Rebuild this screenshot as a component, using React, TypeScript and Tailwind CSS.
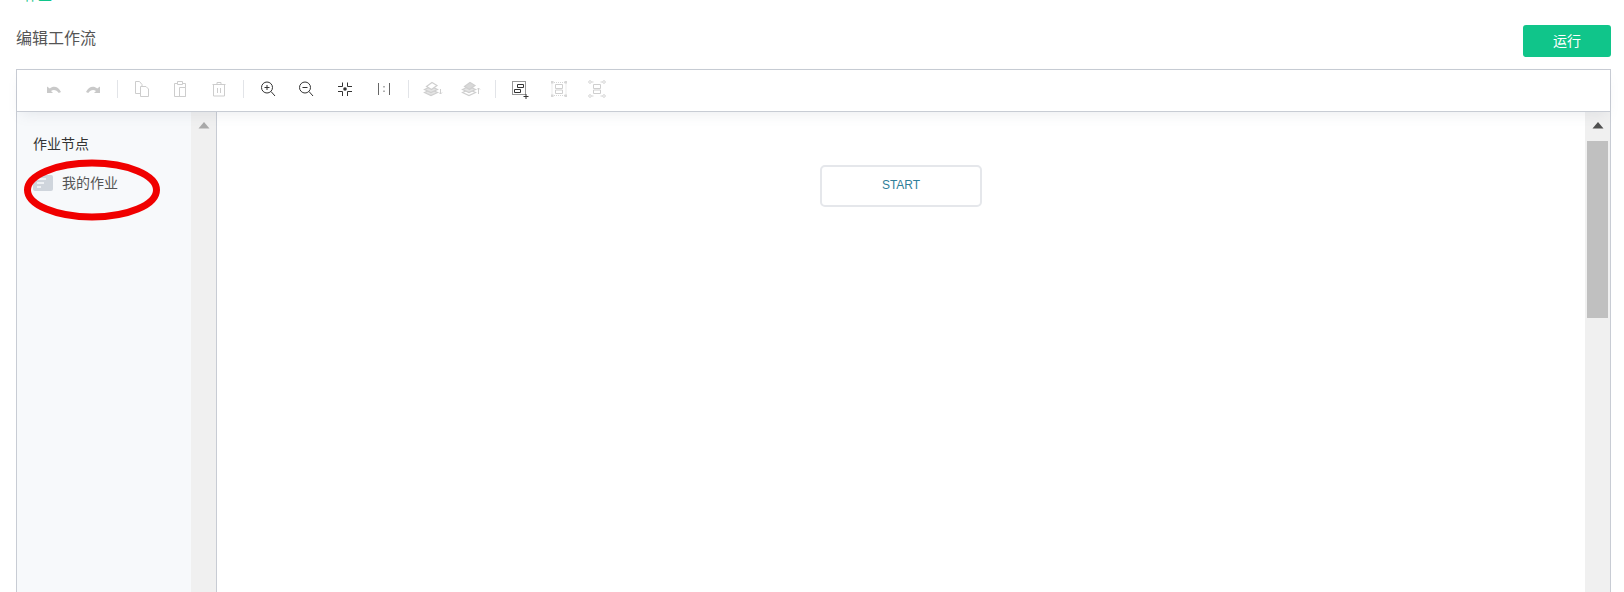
import React from 'react';

const font = { fontFamily: '"Liberation Sans", "Noto Sans CJK SC", sans-serif' };

const Separator = () => <div className="w-px h-[18px] bg-[#e2e4e8] mx-[4.5px]" />;

const ToolButton = ({ children }: { children: React.ReactNode }) => (
  <div className="w-[38.7px] h-[20px] flex items-center justify-center">
    <svg width="20" height="20" viewBox="0 0 20 20" fill="none">
      {children}
    </svg>
  </div>
);

const Toolbar = () => (
  <div className="relative z-10 h-[42px] shrink-0 flex items-center pl-[18px] pb-[3px] bg-white border-b border-[#c8ccd4] shadow-[0_6px_14px_-4px_rgba(120,130,150,0.14)]">
    {/* undo */}
    <ToolButton>
      <path d="M3 7.500V14h6L7 12c2.400-1.800 5.600-1.200 7.800 2l2.200-1C14.400 7.600 9.600 6.400 5.800 9.400L3 7.500z" fill="#c9c9c9" />
    </ToolButton>
    {/* redo */}
    <ToolButton>
      <path d="M17 7.500V14h-6l2-2c-2.400-1.800-5.600-1.200-7.800 2L3 13c2.600-5.400 7.400-6.600 11.200-3.600L17 7.500z" fill="#c9c9c9" />
    </ToolButton>
    <Separator />
    {/* copy */}
    <ToolButton>
      <g stroke="#cdcdcd" strokeWidth="1">
        <path d="M9.500 14.500h-6v-12h4l2.500 3v1.500" />
        <path d="M8.500 7.500h5.500l2.500 2.500v7.500h-8z" fill="#fff" />
      </g>
    </ToolButton>
    {/* paste */}
    <ToolButton>
      <g stroke="#cdcdcd" strokeWidth="1">
        <path d="M4.500 4.500h11v13h-11z" />
        <path d="M7.500 2.500h5v3h-5z" fill="#fff" />
        <path d="M9.500 8.500h6v9h-6z" fill="#fff" />
      </g>
    </ToolButton>
    {/* trash */}
    <ToolButton>
      <g stroke="#cdcdcd" strokeWidth="1">
        <path d="M3.500 5.500h13M4.500 5.500h11v11.500h-11zM8 5.500V3.500h4v2M8.500 9v5M11.500 9v5" />
      </g>
    </ToolButton>
    <Separator />
    {/* zoom in */}
    <ToolButton>
      <g stroke="#333" strokeWidth="1">
        <circle cx="9" cy="8.500" r="5.500" />
        <path d="M13 12.500l4 4.500M9 6v5M6.500 8.500h5" />
      </g>
    </ToolButton>
    {/* zoom out */}
    <ToolButton>
      <g stroke="#333" strokeWidth="1">
        <circle cx="9" cy="8.500" r="5.500" />
        <path d="M13 12.500l4 4.500M6.500 8.500h5" />
      </g>
    </ToolButton>
    {/* fit */}
    <ToolButton>
      <g stroke="#333" strokeWidth="1">
        <path d="M3 7.500h4.500V3.500M12.500 3.500v4H17M3 12.500h4.500V17M12.500 17v-4.500H17" />
      </g>
      <circle cx="10" cy="10" r="1.800" fill="#333" />
    </ToolButton>
    {/* actual size */}
    <ToolButton>
      <g stroke="#666" strokeWidth="1">
        <path d="M4.500 4v12M15.500 4v12" />
        <path d="M10 7v1.500M10 11.500V13" />
      </g>
    </ToolButton>
    <Separator />
    {/* send to back */}
    <ToolButton>
      <g stroke="#cfcfcf" strokeWidth="1.200" fill="#e4e4e4">
        <path d="M1.500 13.500l6.500-3 6.500 3-6.500 3z" />
        <path d="M1.500 10.500l6.500-3 6.500 3-6.500 3z" />
        <path d="M3.500 7.500l5.500-4 5 3-5.500 4z" fill="#fff" />
      </g>
      <path d="M17.500 10v5M16 13.500l1.500 1.500 1.500-1.500" stroke="#cfcfcf" />
    </ToolButton>
    {/* bring to front */}
    <ToolButton>
      <g stroke="#cfcfcf" strokeWidth="1.200">
        <path d="M1.500 13.500l6.500-3 6.500 3-6.500 3z" fill="#fff" />
        <path d="M1.500 10.500l6.500-3 6.500 3-6.500 3z" fill="#e4e4e4" />
        <path d="M3.500 7.500l5.500-4 5 3-5.500 4z" fill="#d8d8d8" />
      </g>
      <path d="M17.500 15v-6M16 10.500L17.500 9l1.500 1.500" stroke="#cfcfcf" />
    </ToolButton>
    <Separator />
    {/* group add */}
    <ToolButton>
      <path d="M2.500 2.500h13v13h-13z" stroke="#333" strokeDasharray="1 1" />
      <path d="M7.500 5.500h6v3h-6zM4.500 10.500h6v3h-6z" stroke="#333" />
      <path d="M13.500 17.500h5M16 15v5" stroke="#333" />
    </ToolButton>
    {/* group */}
    <ToolButton>
      <path d="M3 3.500h14v13H3z" stroke="#d6d6d6" strokeDasharray="1 1" />
      <path d="M2 2h2.500v2.500H2zM15.500 2H18v2.500h-2.500zM2 15.500h2.500V18H2zM15.500 15.500H18V18h-2.500z" fill="#d6d6d6" />
      <path d="M6.500 5.500h7v4h-7zM6.500 11h7v3.500h-7z" stroke="#cfcfcf" />
    </ToolButton>
    {/* ungroup */}
    <ToolButton>
      <path d="M4.500 3h2M13.500 3h2M4.500 17h2M13.500 17h2" stroke="#d6d6d6" />
      <circle cx="3" cy="3" r="1.300" stroke="#d6d6d6" />
      <circle cx="17" cy="3" r="1.300" stroke="#d6d6d6" />
      <circle cx="3" cy="17" r="1.300" stroke="#d6d6d6" />
      <circle cx="17" cy="17" r="1.300" stroke="#d6d6d6" />
      <path d="M6.500 5.500h7v4h-7zM6.500 11h7v3.500h-7z" stroke="#cfcfcf" />
    </ToolButton>
  </div>
);

const UpArrow = ({ color }: { color: string }) => (
  <div className="h-[27px] flex items-center justify-center shrink-0">
    <svg width="12" height="7" viewBox="0 0 12 7">
      <path d="M6 0l5.500 6.500H.5z" fill={color} />
    </svg>
  </div>
);

const Sidebar = () => (
  <div className="relative w-[200px] shrink-0 flex border-r border-[#c8ccd4]">
    <div className="w-[174px] bg-[#f7f9fb] pl-[16px] pt-[22px]">
      <div className="text-[14px] leading-[20px] text-[#333]">作业节点</div>
      <div className="flex items-center gap-[9px] mt-[19px] h-[20px]">
        <div className="w-[20px] h-[16px] rounded-[2px] bg-[#cfd5dc] flex flex-col justify-center gap-[2px] pl-[4px]">
          <div className="w-[9px] h-[2px] bg-[#eef1f4]" />
          <div className="w-[7px] h-[2px] bg-[#eef1f4]" />
          <div className="w-[4px] h-[2px] bg-[#eef1f4]" />
        </div>
        <span className="text-[14px] leading-[20px] text-[#555]">我的作业</span>
      </div>
    </div>
    <div className="flex-1 bg-[#f0f0f0]">
      <UpArrow color="#a9a9a9" />
    </div>
    {/* hand drawn red circle from the annotated screenshot */}
    <svg className="absolute left-[5px] top-[46px]" width="140" height="64" viewBox="0 0 140 64" fill="none">
      <ellipse cx="70" cy="32" rx="64.500" ry="27" stroke="#f00000" strokeWidth="7" />
    </svg>
  </div>
);

const Canvas = () => (
  <div className="flex-1 flex min-w-0">
    <div className="flex-1 bg-white flex justify-center pt-[53px]">
      <div className="w-[162px] h-[42px] bg-white border-2 border-[#e5e7eb] rounded-[5px] flex justify-center pt-[9px]">
        <span className="text-[12px] leading-[18px] text-[#2f7f9a]">START</span>
      </div>
    </div>
    <div className="w-[25px] shrink-0 bg-[#f0f0f0] px-[2px]">
      <UpArrow color="#505050" />
      <div className="h-[177px] mt-[2px] bg-[#c0c0c0]" />
    </div>
  </div>
);

export default function App() {
  return (
    <div className="h-[592px] w-[1624px] overflow-hidden bg-white" style={font}>
      <div className="h-[2px] overflow-hidden pl-[24px]">
        <div className="-mt-[13px] text-[14px] leading-[16px] text-[#10c58a]">作业</div>
      </div>
      <div className="pl-[16px] pr-[13px] flex justify-between">
        <div className="mt-[26px] text-[16px] leading-[22px] text-[#555]">编辑工作流</div>
        <button className="mt-[23px] w-[88px] h-[32px] bg-[#10c58a] rounded-[3px] text-white text-[14px]">运行</button>
      </div>
      <div className="ml-[16px] mr-[13px] mt-[12px] h-[540px] border border-[#c8ccd4] flex flex-col">
        <Toolbar />
        <div className="flex flex-1 min-h-0">
          <Sidebar />
          <Canvas />
        </div>
      </div>
    </div>
  );
}
